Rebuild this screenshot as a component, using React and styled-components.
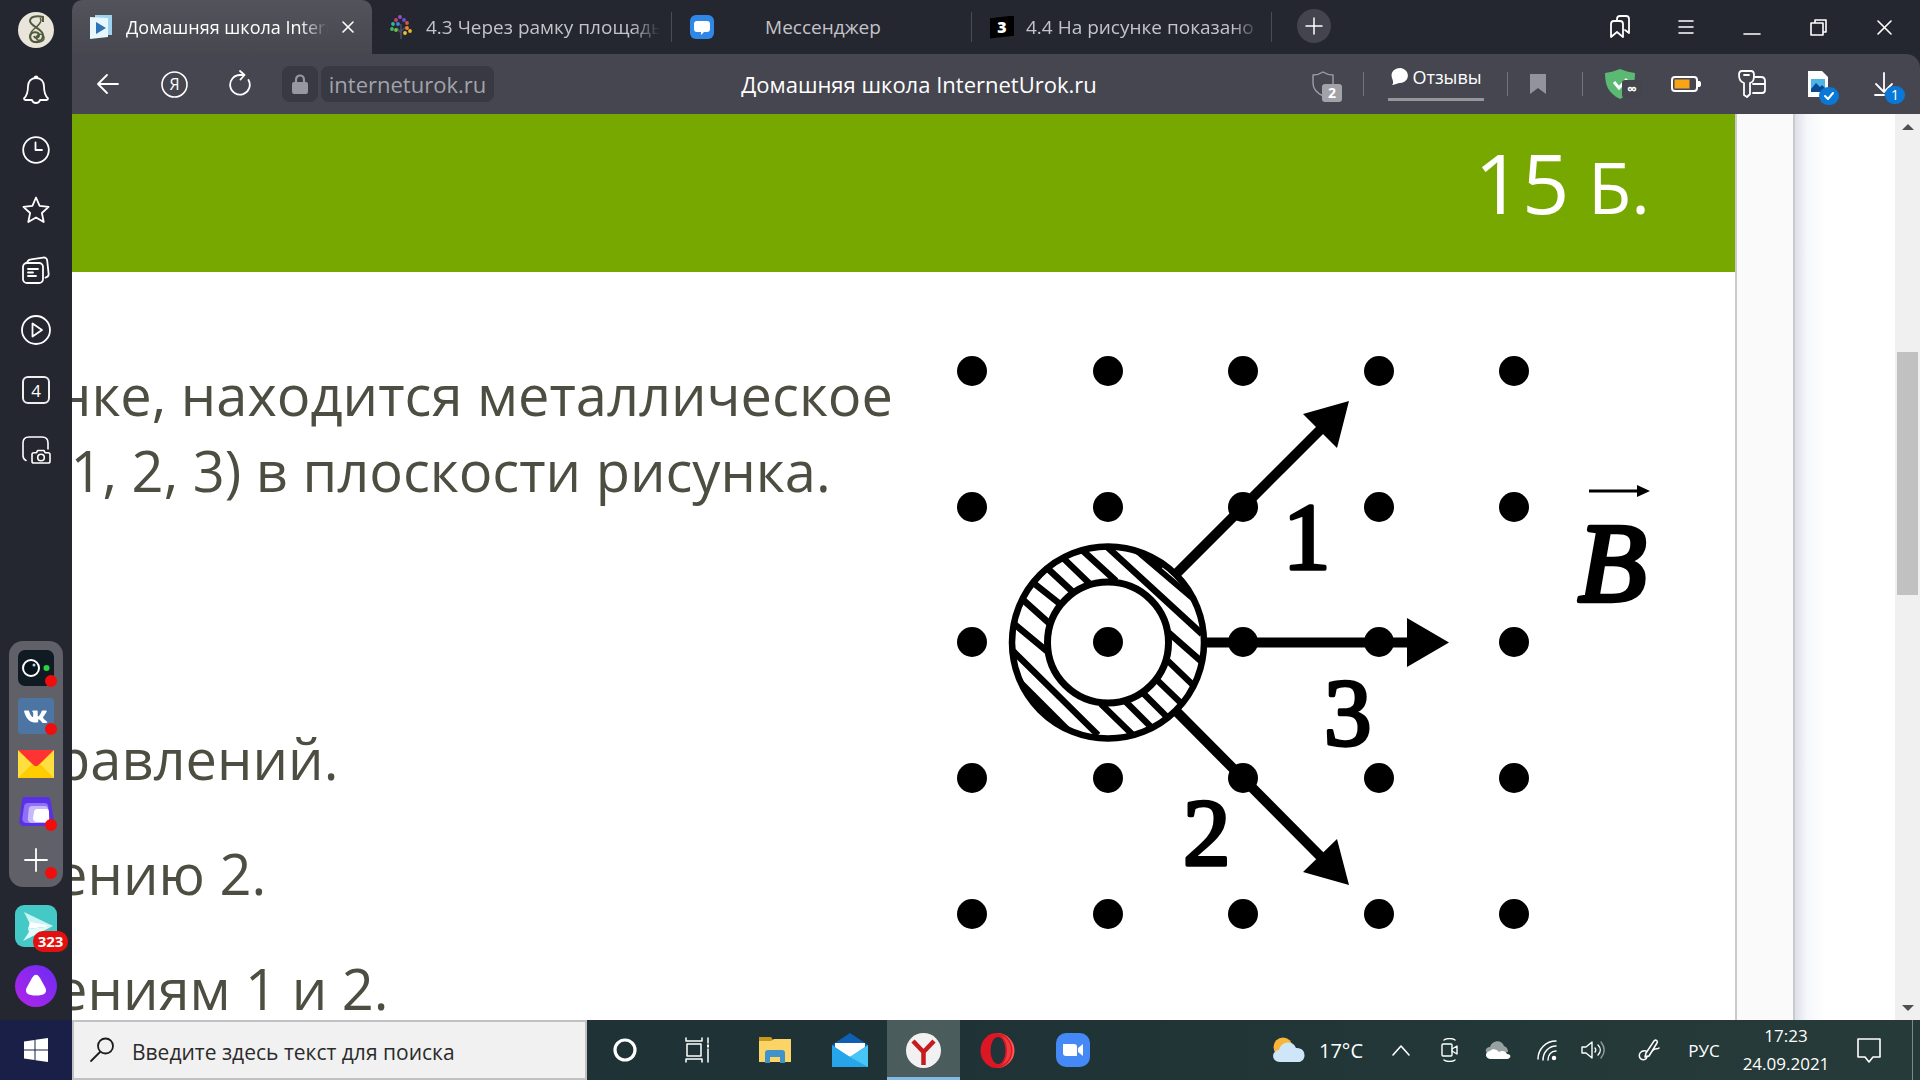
import React from "react";
import styled, { createGlobalStyle, css } from "styled-components";

const Global = createGlobalStyle`
  * { box-sizing: border-box; }
  body { margin: 0; overflow: hidden; font-family: "Open Sans", "Noto Sans", sans-serif; }
  button { border: 0; padding: 0; background: none; color: inherit; font: inherit; }
  p, ul, h1, h2, figure { margin: 0; padding: 0; font-weight: 400; }
  svg { display: block; flex: none; }
`;

const Desktop = styled.div`
  display: grid;
  grid-template-rows: minmax(0, 1fr) 60px;
  height: 100vh;
`;

const Browser = styled.div`
  display: grid;
  grid-template-columns: 72px minmax(0, 1fr);
  background: #242630;
  color: #fff;
  min-height: 0;
`;

/* ---------- side panel ---------- */

const Sidebar = styled.nav`
  display: flex;
  flex-direction: column;
  align-items: center;
  padding-bottom: 13px;
  gap: 18px;
`;

const SideTop = styled.div`
  flex: 1;
  display: flex;
  flex-direction: column;
`;

const SideButton = styled.button`
  width: 72px;
  height: 60px;
  display: grid;
  place-items: center;
  font-size: 18px;
`;

const Dock = styled.div`
  width: 54px;
  height: 246px;
  padding: 3px 0;
  border-radius: 14px;
  background: #5f6068;
`;

const DockButton = styled.button`
  position: relative;
  width: 54px;
  height: 48px;
  display: grid;
  place-items: center;
`;

const Dot = styled.span`
  position: absolute;
  right: 6px;
  bottom: 5px;
  width: 12px;
  height: 12px;
  border-radius: 50%;
  background: #f20d0d;
`;

const AppButton = styled.button`
  position: relative;
  width: 42px;
  height: 42px;
`;

const Count = styled.span`
  position: absolute;
  left: 18px;
  top: 26px;
  width: 35px;
  height: 21px;
  border-radius: 10px;
  background: #e3100f;
  font-size: 15px;
  line-height: 21px;
  font-weight: 700;
  text-align: center;
`;

/* ---------- tabs and toolbar ---------- */

const Main = styled.div`
  display: grid;
  grid-template-rows: 54px 60px minmax(0, 1fr);
  min-height: 0;
`;

const TabStrip = styled.header`
  display: flex;
  align-items: stretch;
  padding-right: 3px;
`;

const Tab = styled.div`
  width: 300px;
  display: flex;
  align-items: center;
  gap: 14px;
  padding: 0 12px 0 18px;
  position: relative;
  color: #c3c4c9;
  font-size: 19px;
  ${(p) =>
    p.$active
      ? css`
          color: #fff;
          font-size: 18px;
          padding-right: 18px;
          background: linear-gradient(#53535c, #474750);
          border-radius: 10px 10px 0 0;
        `
      : css`
          &::after {
            content: "";
            position: absolute;
            right: 0;
            top: 12px;
            width: 1px;
            height: 30px;
            background: #4a4c56;
          }
        `}
`;

const TabTitle = styled.button`
  flex: 1;
  min-width: 0;
  overflow: hidden;
  white-space: nowrap;
  line-height: 28px;
  text-align: ${(p) => (p.$center ? "center" : "left")};
  ${(p) =>
    p.$center
      ? css`
          padding-right: 42px;
        `
      : css`
          mask-image: linear-gradient(90deg, #000 calc(100% - 28px), transparent);
        `}
`;

const NewTab = styled.button`
  width: 34px;
  height: 34px;
  margin: 9px 0 0 25px;
  border-radius: 50%;
  background: #43444e;
  display: grid;
  place-items: center;
`;

const Spacer = styled.div`
  flex: 1;
`;

const Slot = styled.button`
  width: 66px;
  display: grid;
  place-items: center;
`;

const Slots = styled.div`
  display: flex;
  padding-left: 4px;
`;

const Toolbar = styled.div`
  display: flex;
  align-items: stretch;
  padding: 0 3px;
  background: #464650;
  border-radius: 0 14px 0 0;
`;

const Chip = styled.button`
  align-self: center;
  width: ${(p) => p.$width}px;
  height: 36px;
  margin-left: ${(p) => p.$gap}px;
  border-radius: 8px;
  background: #383942;
  color: #a2a3aa;
  display: grid;
  place-items: center;
  font-size: 22px;
  line-height: 36px;
`;

const PageName = styled.h1`
  flex: 1;
  padding-left: 58px;
  text-align: center;
  font-size: 22px;
  line-height: 60px;
  white-space: nowrap;
`;

const Group = styled.div`
  width: ${(p) => p.$width}px;
  padding-right: ${(p) => p.$end || 0}px;
  display: flex;
  align-items: center;
  justify-content: center;
  position: relative;
  &::after {
    content: "";
    position: absolute;
    right: 0;
    top: 18px;
    height: 24px;
    width: 1px;
    background: #74757d;
  }
`;

const Reviews = styled.button`
  display: flex;
  align-items: center;
  gap: 4px;
  height: 36px;
  padding: 0 2px 10px 3px;
  margin-bottom: 2px;
  border-bottom: 3px solid #96979d;
  font-size: 18px;
  line-height: 24px;
`;

/* ---------- page ---------- */

const Viewport = styled.main`
  display: flex;
  background: #fff;
  overflow: hidden;
  min-height: 0;
`;

const Sheet = styled.article`
  flex: 1;
  min-width: 0;
  overflow: hidden;
  color: #4d4e41;
`;

const TaskHead = styled.div`
  height: 158px;
  padding-right: 85px;
  background: #76a800;
  color: #fff;
  text-align: right;
  font-size: 83px;
  line-height: 136px;
`;

const Unit = styled.span`
  font-size: 71px;
`;

const TaskBody = styled.div`
  display: flex;
  align-items: flex-start;
  padding-right: 55px;
`;

const TaskText = styled.div`
  flex: 1;
  min-width: 0;
  margin-left: -16px;
  padding-top: 84px;
  font-size: 56px;
  line-height: 76px;
  white-space: pre;
`;

const Answers = styled.ul`
  margin-top: 212px;
  display: grid;
  gap: 39px;
  list-style: none;
`;

const Figure = styled.figure`
  margin-top: 68px;
`;

const Gutter = styled.div`
  width: 60px;
  background: #fafafa;
  border: solid #c9cacc;
  border-width: 0 2px;
`;

const Backdrop = styled.div`
  width: 100px;
  background: linear-gradient(90deg, #dde0e9, #f6f7fa 12px, #fff 30px);
`;

const Scrollbar = styled.div`
  width: 25px;
  display: flex;
  flex-direction: column;
  align-items: center;
  background: #f0f0f0;
`;

const ScrollArrow = styled.button`
  width: 25px;
  height: 25px;
  display: grid;
  place-items: center;
`;

const Track = styled.div`
  flex: 1;
  width: 21px;
  padding-top: 213px;
`;

const Thumb = styled.div`
  height: 243px;
  background: #c1c1c1;
`;

/* ---------- taskbar ---------- */

const Taskbar = styled.footer`
  display: flex;
  background: linear-gradient(90deg, #1f3138, #1f3336 50%, #263b39);
  color: #fff;
`;

const Start = styled.button`
  width: 72px;
  background: #1a1f47;
  display: grid;
  place-items: center;
`;

const SearchBox = styled.label`
  width: 515px;
  display: flex;
  align-items: center;
  gap: 17px;
  padding-left: 15px;
  border: 2px solid #bfc1c2;
  background: #f1f1f1;
`;

const SearchInput = styled.input`
  flex: 1;
  min-width: 0;
  border: 0;
  padding: 4px 0 0;
  outline: 0;
  background: none;
  font: 21px/30px "Open Sans", "Noto Sans", sans-serif;
  &::placeholder {
    color: #2b2b2b;
    opacity: 1;
  }
`;

const Task = styled.button`
  width: ${(p) => (p.$active ? 73 : 75)}px;
  display: grid;
  place-items: center;
  ${(p) =>
    p.$active &&
    css`
      background: #4b5c5c;
      box-shadow: inset 0 -3px #84b9e2;
    `}
`;

const Tray = styled.div`
  display: flex;
  align-items: stretch;
  margin-left: auto;
  padding-right: 7px;
`;

const TrayButton = styled.button`
  width: ${(p) => p.$width}px;
  display: flex;
  align-items: center;
  justify-content: center;
  gap: 14px;
  font-size: ${(p) => p.$size || 17}px;
  white-space: nowrap;
`;

const Clock = styled(TrayButton)`
  flex-direction: column;
  gap: 0;
  line-height: 28px;
`;

const Peek = styled.div`
  width: 1px;
  margin-left: 21px;
  background: #7c8a89;
`;

/* ---------- drawings ---------- */

const Line = ({ w = 32, h = w, sw = 2, children, ...rest }) => (
  <svg
    width={w}
    height={h}
    viewBox={`0 0 ${w} ${h}`}
    fill="none"
    stroke="currentColor"
    strokeWidth={sw}
    strokeLinecap="round"
    strokeLinejoin="round"
    aria-hidden="true"
    {...rest}
  >
    {children}
  </svg>
);

const Pic = ({ w, h = w, children }) => (
  <svg width={w} height={h} viewBox={`0 0 ${w} ${h}`} aria-hidden="true">
    {children}
  </svg>
);

const Avatar = () => (
  <Pic w={36}>
    <circle cx="18" cy="18" r="18" fill="#e9e5da" />
    <g fill="none" stroke="#525b3c" strokeWidth="2">
      <path d="M25 10V5c-7-2-13 0-13 4 0 5 13 8 13 14 0 5-4 7-8 7s-6-5-4-8 8-2 8 1-4 4-5 1" />
      <path d="M22 6c3 3-2 8-6 11s-6 9-2 12 12 1 12-3-5-5-7-2 1 5 3 4" strokeWidth="1.500" />
    </g>
  </Pic>
);

const Bell = () => (
  <Line w={28} h={30} sw={1.8}>
    <path d="M14 3c-5 0-8 3.500-8 8.500 0 6-1 9-4 12 0 1 .5 1.500 1.500 1.500h6.500c1 4 7 4 8 0h6.500c1 0 1.500-.5 1.500-1.500-3-3-4-6-4-12C22 6.500 19 3 14 3zM12.500 3c0-2 3-2 3 0" />
  </Line>
);

const History = () => (
  <Line w={28} sw={1.8}>
    <circle cx="14" cy="14" r="12.800" />
    <path d="M13.500 6.500V14H20" />
  </Line>
);

const Star = () => (
  <Line w={28} sw={1.8}>
    <path d="M14 1.500l3.600 8.300 9 1-6.700 6.200 1.800 9L14 21.500 6.300 26l1.800-9L1.400 10.800l9-1z" />
  </Line>
);

const Notes = () => (
  <Line w={28} sw={1.8}>
    <rect x="1" y="7" width="20" height="20" rx="4" />
    <path d="M5 6.500C6 4 7 3.500 9 3.300l12-1.700c2.500-.4 4 .8 4.200 3l1.400 13c.3 2-.5 3.400-3.100 4.100M6 13h10M6 16.500h5M6 20h8" />
  </Line>
);

const Play = () => (
  <Line w={30} sw={1.8}>
    <circle cx="15" cy="15" r="14" />
    <path d="M11.500 8.500v13l9.500-6.500z" />
  </Line>
);

const Boxed = styled.span`
  width: 28px;
  height: 28px;
  border: 2px solid #eeeef1;
  border-radius: 6px;
  font-size: 17px;
  line-height: 26px;
`;

const Shot = () => (
  <Line w={30} h={30} sw={1.6}>
    <path d="M5 25.500c-2.500-1-3-2-3-5V8c0-4 2-6 6-6h13c4 0 6 2 6 6v6" />
    <path d="M11 19.500c0-1 .8-1.800 1.800-1.800h2.700l1.200-2.200h6.200l1.200 2.200h3c1.200 0 1.900.8 1.900 1.800v6.700c0 1-.8 1.800-1.800 1.800H12.800c-1 0-1.800-.8-1.800-1.800z" />
    <circle cx="20" cy="22.500" r="3.300" />
  </Line>
);

const CameraApp = () => (
  <Pic w={36}>
    <rect width="36" height="36" rx="7" fill="#101a22" />
    <circle cx="13" cy="18" r="8" fill="#07131b" stroke="#fff" strokeWidth="2" />
    <circle cx="16" cy="15" r="1.500" fill="#b7d5e4" />
    <circle cx="28.500" cy="18" r="3" fill="#2bd43d" />
  </Pic>
);

const VkApp = () => (
  <Pic w={36}>
    <rect width="36" height="36" rx="4" fill="#4c75a3" />
    <path
      fill="#fff"
      d="M16.800 24.500c-5 0-8.500-4-10.600-10.500-.3-.9 0-1.500.9-1.500h2.700c.8 0 1.100.3 1.400 1.100 1 3 2.600 5.500 3.400 5.500.5 0 .6-.4.600-1.300v-2.400c0-1.500-1-1.700-1-2.200 0-.4.4-.8 1-.8h3.600c.7 0 .9.4.9 1.200v3.900c0 .7.2.9.5.9.8 0 2.500-2.700 3.300-4.900.3-.8.600-1.100 1.400-1.100h2.800c.9 0 1.200.5.9 1.300-.5 1.300-3 4.600-3.300 5.200-.3.500-.3.900.2 1.500 1 1.200 2.900 2.400 3.600 3.400.4.700 0 1.200-.8 1.200h-3.100c-1.400 0-1.900-2.400-4-3.600-.6-.3-1-.1-1 .7v1.500c0 .7-.3.900-1.400.9z"
    />
  </Pic>
);

const MailApp = () => (
  <Pic w={36} h={28}>
    <path fill="#ffcc00" d="M0 0h36v28H0z" />
    <path fill="#ffdf40" d="M0 0v28L14 14zM36 0v28L22 14z" />
    <path fill="#f33" d="M0 0h36L20 15.500c-1.200 1-2.800 1-4 0z" />
  </Pic>
);

const CardsApp = () => (
  <Pic w={36} h={32}>
    <path fill="#5a30e8" d="M7 1h22c2 0 3 1 3.500 3L36 25c.3 3-1 5-4 5H6c-3 0-5-2-4.600-5L4 4c.2-2 1-3 3-3z" />
    <path fill="#8e71f5" d="M10 7h16c3 0 4 1 4.300 4L32 27H9c-3 0-5-2-4.700-5L6 11c.4-3 1.500-4 4-4z" />
    <path fill="#c6b8fb" d="M14 10h12c3 0 4 1 4.300 4L31 27H14c-3 0-4.500-2-4.200-5l.8-8c.3-3 1.400-4 3.400-4z" />
    <path fill="#fff" d="M19 13h9c2 0 3 1 3 3v10H19c-3 0-4-2-4-4l1-6c.4-2 1.300-3 3-3z" />
  </Pic>
);

const PlaneApp = () => (
  <Pic w={42}>
    <rect width="42" height="42" rx="9" fill="#45c9c6" />
    <path fill="#c9f5f3" d="M9 7l29 14-23-2z" />
    <path fill="#fff" d="M15 17l23 4-25 3z" />
    <path fill="#e1fbfa" d="M13 24l25-3L8 36l6-9z" />
  </Pic>
);

const AliceApp = () => (
  <Pic w={42}>
    <defs>
      <linearGradient id="alice" x1="1" y1="0" x2="0" y2="1">
        <stop offset="0" stopColor="#6a2bf5" />
        <stop offset="1" stopColor="#b325e8" />
      </linearGradient>
    </defs>
    <circle cx="21" cy="21" r="21" fill="url(#alice)" />
    <path fill="#fff" d="M17 13c2.500-4.500 5.500-4.500 8 0l5.500 10c2 5-1.500 7.500-9.500 7.500s-11.500-2.500-9.500-7.500z" />
  </Pic>
);

const UrokIcon = () => (
  <Pic w={22} h={24}>
    <path fill="#9ed2ef" d="M5 0h17v20H5z" />
    <path fill="#e8f6fd" d="M0 2l18 1v19L0 24z" />
    <path fill="#2d73b5" d="M6 7l10 6-10 6z" />
  </Pic>
);

const TreeIcon = () => (
  <Pic w={22} h={24}>
    <path d="M11 24V9M11 18l-4-5M11 16l5-4" stroke="#4a4f6a" strokeWidth="1.500" fill="none" />
    {[
      [10, 2, "#a04bd0"], [6, 5, "#d13c78"], [14, 5, "#5d59d6"], [3, 9, "#2fb6a0"], [8, 9, "#3c8cd6"],
      [17, 8, "#e2513f"], [2, 14, "#3fb964"], [6, 15, "#72c043"], [17, 13, "#ec8c2e"], [20, 16, "#f0b52c"], [15, 18, "#e8c53a"],
    ].map(([x, y, c]) => (
      <circle key={`${x}-${y}`} cx={x} cy={y} r="1.900" fill={c} />
    ))}
  </Pic>
);

const ChatIcon = () => (
  <Pic w={24}>
    <rect width="24" height="24" rx="6" fill="#2f87e8" />
    <path fill="#fff" d="M7 6h10c2 0 3 1 3 3v5c0 2-1 3-3 3h-3l-3 3v-3H7c-2 0-3-1-3-3V9c0-2 1-3 3-3z" />
  </Pic>
);

const ThreeBadge = styled.span`
  flex: none;
  width: 24px;
  height: 23px;
  margin-right: -2px;
  background: #000;
  clip-path: polygon(0 12%, 100% 0, 100% 88%, 0 100%);
  color: #fff;
  font-size: 16px;
  line-height: 22px;
  font-weight: 800;
  text-align: center;
`;

const CloseX = ({ size = 12 }) => (
  <Line w={size} sw={1.6}>
    <path d={`M1 1l${size - 2} ${size - 2}M${size - 1} 1L1 ${size - 1}`} />
  </Line>
);

const Badge = styled.span`
  position: absolute;
  left: ${(p) => p.$x}px;
  top: ${(p) => p.$y}px;
  width: 20px;
  height: 18px;
  border-radius: ${(p) => (p.$round ? 9 : 3)}px;
  background: ${(p) => p.$bg};
  font-size: 14px;
  line-height: 18px;
  font-weight: ${(p) => (p.$round ? 400 : 700)};
  text-align: center;
`;

const Holder = styled.span`
  position: relative;
  display: block;
`;

/* ---------- magnetic field figure ---------- */

const COLS = [32, 168, 303, 439, 574];
const ROWS = [31, 167, 302, 438, 574];
const HATCH = [
  "M163 203L262 294",
  "M141 209L176 241",
  "M121 216L150 244",
  "M106 227L135 254",
  "M91 241L120 264",
  "M81 258L110 284",
  "M73 283L108 312",
  "M73 311L158 395",
  "M161 364L195 397",
  "M183 359L212 388",
  "M201 351L228 378",
  "M216 339L243 365",
  "M228 321L254 346",
  "M229 293L262 322",
];

const FieldFigure = () => (
  <svg width="740" height="600" viewBox="0 0 740 600" role="img" aria-label="Кольцо в магнитном поле">
    <defs>
      <clipPath id="ring">
        <path clipRule="evenodd" d="M70 302a98 98 0 1 0 196 0a98 98 0 1 0-196 0zM108 302a60 60 0 1 0 120 0a60 60 0 1 0-120 0z" />
      </clipPath>
    </defs>
    {ROWS.map((y) => COLS.map((x) => <circle key={`${x}-${y}`} cx={x} cy={y} r="15" />))}
    <g fill="none" stroke="#000">
      <circle cx="168" cy="302.500" r="96" strokeWidth="6.500" />
      <circle cx="168" cy="302.500" r="60.500" strokeWidth="7" />
      <g clipPath="url(#ring)" strokeWidth="6.500">
        <path d={HATCH.join("")} />
        <path d="M197 211L257 262" strokeWidth="6" />
        <path d="M197 207L222 228" strokeWidth="8" />
        <path d="M78 342L132 396" strokeWidth="9" />
      </g>
      <path d="M236 234L382 88M236 371L382 518" strokeWidth="10" />
      <path d="M264 302.500H470" strokeWidth="10" />
      <path d="M649 151H700" strokeWidth="3" />
    </g>
    <path d="M409 61L363 74L397 108zM509 302.500L467 278V327zM409 545L397 499L363 532zM710 151L697 145V157z" />
    <g fontFamily="'Liberation Serif', serif" stroke="#000" strokeWidth="3.500" strokeLinejoin="round">
      <text x="343" y="229" fontSize="95">1</text>
      <text x="243" y="525" fontSize="95">2</text>
      <text x="384" y="405" fontSize="95">3</text>
      <text x="638" y="261" fontSize="112" fontStyle="italic" strokeWidth="4.500">B</text>
    </g>
  </svg>
);

const sideItems = [
  ["Профиль", <Avatar />],
  ["Уведомления", <Bell />],
  ["История", <History />],
  ["Избранное", <Star />],
  ["Коллекции", <Notes />],
  ["Видео", <Play />],
  ["Вкладки", <Boxed>4</Boxed>],
  ["Скриншот", <Shot />],
];

const dockItems = [
  ["Камера", <CameraApp />, true],
  ["ВКонтакте", <VkApp />, true],
  ["Почта", <MailApp />, false],
  ["Карточки", <CardsApp />, true],
  ["Добавить", <Line w={24} sw={1.8}><path d="M12 1v22M1 12h22" /></Line>, true],
];

const windowItems = [
  ["Закладки", <Line w={20} h={24} sw={1.8}><path d="M7 5V4c0-2 1-3 3-3h6c2 0 3 1 3 3v14l-4-3" /><path d="M1 9c0-2 1-3 3-3h6c2 0 3 1 3 3v13l-6-5-6 5z" /></Line>],
  ["Меню", <Line w={16} sw={1.6}><path d="M1 2h14M1 8h14M1 14h14" /></Line>],
  ["Свернуть", <Line w={18} sw={1.6}><path d="M1 16h16" /></Line>],
  ["Развернуть", <Line w={17} sw={1.6}><path d="M1 4h12v12H1zM5 4V1h11v12h-3" /></Line>],
  ["Закрыть", <CloseX size={15} />],
];

const tasks = [
  ["Кортана", <Line w={26} sw={3.2}><circle cx="13" cy="13" r="10" /></Line>],
  ["Представление задач", <Line w={32} h={26} sw={1.5}><path d="M3 7h14v12H3zM2 1v3h16V1M2 25v-3h16v3M24 1v5M24 12v13" /><path d="M23 9h2" strokeWidth="3" strokeLinecap="butt" /></Line>],
  ["Проводник", (
    <Pic w={32} h={28}>
      <path fill="#c8981b" d="M0 1h12l2 3v5H0z" />
      <path fill="#fbd467" d="M0 5h12l3-2h17v23H0z" />
      <path fill="#3f93c9" d="M6 27V17c0-2 1-3 3-3h14c2 0 3 1 3 3v10h-5v-6H11v6z" />
    </Pic>
  )],
  ["Почта", (
    <Pic w={36} h={34}>
      <path fill="#0f5fb3" d="M0 12L18 0l18 12v8H0z" />
      <path fill="#fff" d="M3 10h30v8L18 24 3 18z" />
      <path fill="#27a5ea" d="M0 12l18 12 18-12v22H0z" />
      <path fill="#47c5f5" d="M36 12v22L18 24z" />
    </Pic>
  )],
  ["Яндекс Браузер", (
    <Pic w={35}>
      <circle cx="17.500" cy="17.500" r="17.500" fill="#f1f1f1" />
      <path fill="none" stroke="#c51d1f" strokeWidth="4.500" d="M7 8l10.500 11L28 8M17.500 18v14" />
    </Pic>
  )],
  ["Opera", (
    <Pic w={35}>
      <path fill="#ff5a55" d="M17 0a17.500 17.500 0 1 1 0 35z" />
      <ellipse cx="16.500" cy="17.500" rx="16" ry="17.500" fill="#dd1624" />
      <path fill="#ee3b3e" d="M20 2c8 3 11 9 11 15.500S28 30 20 33c5-3 7-9 7-15.500S25 5 20 2z" />
      <ellipse cx="18" cy="17.500" rx="7.500" ry="13.500" fill="#20343a" />
    </Pic>
  )],
  ["Zoom", (
    <Pic w={34}>
      <rect width="34" height="34" rx="10" fill="#4489f5" />
      <path fill="#fff" d="M7 11h11c2 0 3 1 3 3v9H10c-2 0-3-1-3-3zM22 15l5-4v12l-5-4z" />
    </Pic>
  )],
];

const trayItems = [
  ["Скрытые значки", 52, <Line w={20} h={14} sw={1.6}><path d="M2 12l8-9 8 9" /></Line>],
  ["Видеосвязь", 46, <Line w={18} h={24} sw={1.4}><rect x="1" y="6" width="10" height="12" rx="1" /><path d="M11 11l5-3v8l-5-3M3 2c3-2 8-2 11 0M3 22c3 2 8 2 11 0" /></Line>],
  ["Облако", 50, (
    <Pic w={26} h={18}>
      <path fill="#97a1a0" d="M4 13C-1 12 0 6 5 6c2-7 12-8 14-1 3 1 4 3 4 6z" />
      <path fill="#fff" d="M6 18c-6 0-7-7-1-8 2-3 7-2 9 1 3-2 7-1 8 2 5 0 4 5 0 5z" />
    </Pic>
  )],
  ["Сеть", 48, <Line w={20} h={21} sw={1.5}><path d="M1 19C1 9 9 1 19 1M6 20C6 12 12 6 19 6M11 20c0-5 3-9 8-9" /><circle cx="17" cy="18" r="1.500" fill="#fff" /></Line>],
  ["Звук", 44, <Line w={24} h={20} sw={1.4}><path d="M1 7h4l6-5v16l-6-5H1zM14 8c1 1 1 3 0 4M17 5c3 3 3 7 0 10" /><path d="M20 2c4 5 4 11 0 16" opacity=".5" /></Line>],
  ["Перо", 68, <Line w={22} h={22} sw={1.5}><path d="M8 14L16 2c2-2 4 0 3 2l-8 13-4 1zM8 12c-5-1-8 3-6 7 2 3 7 2 7-2M13 14c3-6 6-3 8-5" /></Line>],
];

export default function App() {
  return (
    <>
      <Global />
      <Desktop>
        <Browser>
          <Sidebar>
            <SideTop>
              {sideItems.map(([name, icon]) => (
                <SideButton key={name} aria-label={name}>{icon}</SideButton>
              ))}
            </SideTop>
            <Dock>
              {dockItems.map(([name, icon, dot]) => (
                <DockButton key={name} aria-label={name}>
                  {icon}
                  {dot && <Dot />}
                </DockButton>
              ))}
            </Dock>
            <AppButton aria-label="Мессенджер">
              <PlaneApp />
              <Count>323</Count>
            </AppButton>
            <AppButton aria-label="Алиса"><AliceApp /></AppButton>
          </Sidebar>

          <Main>
            <TabStrip>
              <Tab $active>
                <UrokIcon />
                <TabTitle>Домашняя школа InternetUrok.ru</TabTitle>
                <button aria-label="Закрыть вкладку"><CloseX /></button>
              </Tab>
              <Tab>
                <TreeIcon />
                <TabTitle>4.3 Через рамку площадью</TabTitle>
              </Tab>
              <Tab>
                <ChatIcon />
                <TabTitle $center>Мессенджер</TabTitle>
              </Tab>
              <Tab>
                <ThreeBadge>3</ThreeBadge>
                <TabTitle>4.4 На рисунке показано направление</TabTitle>
              </Tab>
              <NewTab aria-label="Новая вкладка">
                <Line w={18} sw={1.5}><path d="M9 1v16M1 9h16" /></Line>
              </NewTab>
              <Spacer />
              {windowItems.map(([name, icon]) => (
                <Slot key={name} aria-label={name}>{icon}</Slot>
              ))}
            </TabStrip>

            <Toolbar>
              <Slot aria-label="Назад"><Line w={22} sw={1.8}><path d="M21 11H1M10 2l-9 9 9 9" /></Line></Slot>
              <Slot aria-label="Яндекс">
                <Line w={27} sw={1.6}>
                  <circle cx="13.500" cy="13.500" r="12.500" />
                  <text x="13.500" y="19" textAnchor="middle" fontSize="16" fill="currentColor" stroke="none">Я</text>
                </Line>
              </Slot>
              <Slot aria-label="Обновить"><Line w={24} h={28} sw={1.8}><path d="M20.500 10A9.800 9.800 0 1 1 12 5h4M12 1l4.500 4-4 4.500" /></Line></Slot>
              <Chip $width={36} $gap={9} aria-label="Защищённое соединение">
                <Pic w={16} h={20}>
                  <path d="M4 9V6c0-6 8-6 8 0v3" fill="none" stroke="#96979f" strokeWidth="2.200" />
                  <rect y="8" width="16" height="12" rx="2" fill="#96979f" />
                </Pic>
              </Chip>
              <Chip $width={173} $gap={3}>interneturok.ru</Chip>
              <PageName>Домашняя школа InternetUrok.ru</PageName>
              <Group $width={78} $end={4}>
                <Holder>
                  <Line w={22} h={26} sw={1.4} color="#9d9ea5"><path d="M11 1c3 2 6 3 10 3v8c0 6-4 10-10 13C5 22 1 18 1 12V4c4 0 7-1 10-3z" /></Line>
                  <Badge $x={10} $y={13} $bg="#a2a3a8">2</Badge>
                </Holder>
              </Group>
              <Group $width={144}>
                <Reviews>
                  <Pic w={17} h={18}><path fill="#fff" d="M9 0c11 1 10 15 0 15-2 0-3 1-8 2 2-2 1-4 0-7C-1 4 4 0 9 0z" /></Pic>
                  Отзывы
                </Reviews>
              </Group>
              <Group $width={75} $end={16}>
                <button aria-label="В закладки">
                  <Pic w={16} h={20}><path fill="#93949b" d="M0 0h16v20l-8-6-8 6z" /></Pic>
                </button>
              </Group>
              <Slots>
                <Slot aria-label="Защита">
                  <Holder>
                    <Pic w={30}>
                      <path fill="#5bb974" d="M15 0c5 2 9 3 15 4 0 12-3 20-15 26C3 24 0 16 0 4 6 3 10 2 15 0z" />
                      <path d="M9 13l5 6 8-9" fill="none" stroke="#fff" strokeWidth="3" />
                    </Pic>
                    <Badge $x={17} $y={11} $bg="#43444c">∞</Badge>
                  </Holder>
                </Slot>
                <Slot aria-label="Батарея">
                  <Pic w={30} h={16}>
                    <rect x="1" y="1" width="25" height="14" rx="3" fill="none" stroke="#fff" strokeWidth="2" />
                    <rect x="3.500" y="3.500" width="15" height="9" fill="#f7a416" />
                    <path fill="#fff" d="M27 5h1c3 0 3 6 0 6h-1z" />
                  </Pic>
                </Slot>
                <Slot aria-label="Пароли">
                  <Line w={28} sw={1.8}>
                    <path d="M4 1h9c2 0 3 1 3 4s0 6-2 7l-2 1v11l-3 3-3-2V13C3 12 1 9 1 5c0-3 1-4 3-4zM6 5h5" />
                    <path d="M17 7h6c2 0 4 1 4 4v9c0 2-1 3-3 3h-9M15 14h12" />
                  </Line>
                </Slot>
                <Slot aria-label="Изображение">
                  <Holder>
                    <Pic w={20} h={26}>
                      <path fill="#fff" d="M0 0h14l6 6v20H0z" />
                      <path fill="#4cb4e7" d="M3 8h14v12H3z" />
                      <path fill="#0a4a94" d="M3 18l5-6 4 4 2-2 3 3v4H3z" />
                    </Pic>
                    <Badge $round $x={11} $y={16} $bg="#0a78d6">
                      <Line w={20} h={18} sw={2}><path d="M6 9l3 3 5-6" /></Line>
                    </Badge>
                  </Holder>
                </Slot>
                <Slot aria-label="Загрузки">
                  <Holder>
                    <Line w={20} h={24} sw={1.8}><path d="M10 1v18M2 12l8 8 8-8M1 23h9" /></Line>
                    <Badge $round $x={11} $y={14} $bg="#0a78d6">1</Badge>
                  </Holder>
                </Slot>
              </Slots>
            </Toolbar>

            <Viewport>
              <Sheet>
                <TaskHead>15<Unit> Б.</Unit></TaskHead>
                <TaskBody>
                  <TaskText>
                    <p>{"нке, находится металлическое\n 1, 2, 3) в плоскости рисунка."}</p>
                    <Answers>
                      <li>равлений.</li>
                      <li>ению 2.</li>
                      <li>ениям 1 и 2.</li>
                    </Answers>
                  </TaskText>
                  <Figure><FieldFigure /></Figure>
                </TaskBody>
              </Sheet>
              <Gutter />
              <Backdrop />
              <Scrollbar>
                <ScrollArrow aria-label="Вверх"><Pic w={12} h={6}><path fill="#505050" d="M0 6l6-6 6 6z" /></Pic></ScrollArrow>
                <Track><Thumb /></Track>
                <ScrollArrow aria-label="Вниз"><Pic w={12} h={6}><path fill="#505050" d="M0 0l6 6 6-6z" /></Pic></ScrollArrow>
              </Scrollbar>
            </Viewport>
          </Main>
        </Browser>

        <Taskbar>
          <Start aria-label="Пуск">
            <Pic w={24}>
              <path fill="#fff" d="M0 3.500L10.500 2v9.500H0zM11.500 1.800L24 0v11.500H11.500zM0 12.500h10.500V22L0 20.500zM11.500 12.500H24V24l-12.500-1.800z" />
            </Pic>
          </Start>
          <SearchBox>
            <Line w={26} h={26} sw={1.8} color="#1c1c1c"><circle cx="16.500" cy="9" r="7.500" /><path d="M11 15L2 24" /></Line>
            <SearchInput type="text" aria-label="Поиск" placeholder="Введите здесь текст для поиска" />
          </SearchBox>
          {tasks.map(([name, icon], i) => (
            <Task key={name} $active={i === 4} aria-label={name}>{icon}</Task>
          ))}
          <Tray>
            <TrayButton $width={114} $size={20}>
              <Pic w={32} h={26}>
                <circle cx="10" cy="10" r="9.500" fill="#f8b53a" />
                <path fill="#cfe6f8" d="M7 25c-9 0-9-11-1-12 2-9 14-10 17-2 11-1 11 14 2 14z" />
              </Pic>
              17°C
            </TrayButton>
            {trayItems.map(([name, width, icon]) => (
              <TrayButton key={name} $width={width} aria-label={name}>{icon}</TrayButton>
            ))}
            <TrayButton $width={42}>РУС</TrayButton>
            <Clock $width={122}>
              <span>17:23</span>
              <span>24.09.2021</span>
            </Clock>
            <TrayButton $width={44} aria-label="Центр уведомлений">
              <Line w={24} h={25} sw={1.6}><path d="M1 1h22v18h-7l-4 5-4-5H1z" /></Line>
            </TrayButton>
            <Peek />
          </Tray>
        </Taskbar>
      </Desktop>
    </>
  );
}
